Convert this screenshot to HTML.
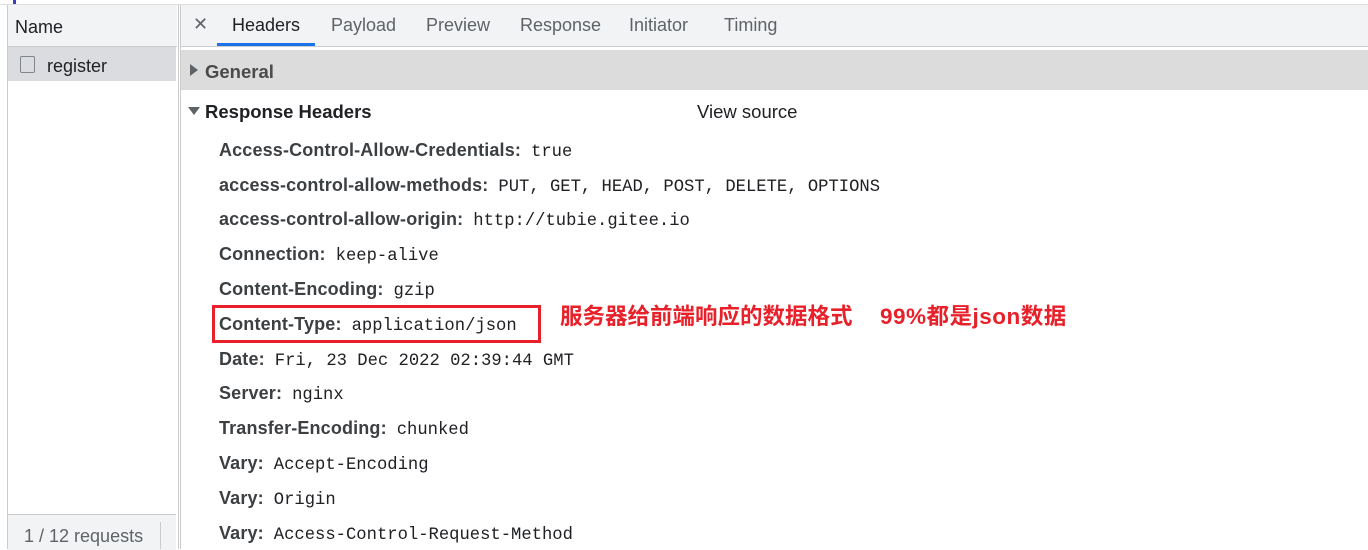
<!DOCTYPE html>
<html><head><meta charset="utf-8"><style>
body{margin:0;width:1368px;height:549px;overflow:hidden;background:#fff;font-family:"Liberation Sans",sans-serif;position:relative}
.abs{position:absolute}
.top{left:0;top:0;width:1368px;height:4px;background:#fff;border-bottom:1px solid #ddd}
.left{left:7px;top:5px;width:170px;height:544px;border-left:1px solid #ccc;border-right:1px solid #ccc;background:#fff}
.right{left:180px;top:5px;width:1188px;height:544px;border-left:1px solid #ccc}
.tabbar{left:181px;top:5px;width:1187px;height:41px;background:#f1f3f4;border-bottom:1px solid #ccc}
.tab{top:15px;font-size:18px;color:#5f6368}
.k{position:absolute;left:219px;font-size:18px;letter-spacing:0.15px;font-weight:bold;color:#3c4043;white-space:nowrap}
.k span{font-family:"Liberation Mono",monospace;font-weight:normal;color:#202124;font-size:17.2px;letter-spacing:0;margin-left:10px}
.cn{position:absolute;top:300px;font-size:21px;font-weight:bold;color:#e8202a;font-family:'Liberation Sans','Noto Sans CJK SC',sans-serif;white-space:nowrap}
</style></head><body>
<div class="abs top"></div>
<div class="abs" style="left:13px;top:0;width:3px;height:4px;background:#3d3dbb"></div>
<div class="abs left"></div>
<div class="abs" style="left:8px;top:5px;width:169px;height:41px;background:#f1f3f4;border-bottom:1px solid #ccc"></div>
<div class="abs" style="left:15px;top:17px;font-size:18px;color:#202124">Name</div>
<div class="abs" style="left:8px;top:47px;width:168px;height:34px;background:#dadce0"></div>
<div class="abs" style="left:20px;top:56px;width:13px;height:15px;border:1.5px solid #80868b;border-radius:2px"></div>
<div class="abs" style="left:47px;top:56px;font-size:18px;color:#202124">register</div>
<div class="abs" style="left:8px;top:514px;width:168px;height:35px;background:#f1f3f4;border-top:1px solid #ccc"></div>
<div class="abs" style="left:24px;top:526px;font-size:18px;color:#5f6368">1 / 12 requests</div>
<div class="abs" style="left:160px;top:522px;width:1px;height:27px;background:#ccc"></div>
<div class="abs right"></div>
<div class="abs tabbar"></div>
<div class="abs tab" style="left:193px;top:14px;color:#5f6368">✕</div>
<div class="abs tab" style="left:232px;color:#202124">Headers</div>
<div class="abs" style="left:217px;top:43px;width:98px;height:3px;background:#1a73e8"></div>
<div class="abs tab" style="left:331px">Payload</div>
<div class="abs tab" style="left:426px">Preview</div>
<div class="abs tab" style="left:520px">Response</div>
<div class="abs tab" style="left:629px">Initiator</div>
<div class="abs tab" style="left:724px">Timing</div>
<div class="abs" style="left:181px;top:50px;width:1187px;height:40px;background:#dcdcdc"></div>
<div class="abs" style="left:190px;top:64px;width:0;height:0;border-left:8px solid #5f6368;border-top:6px solid transparent;border-bottom:6px solid transparent"></div>
<div class="abs" style="left:205px;top:61px;font-size:18.5px;font-weight:bold;color:#4a4a4a">General</div>
<div class="abs" style="left:188px;top:107px;width:0;height:0;border-top:8px solid #5f6368;border-left:6px solid transparent;border-right:6px solid transparent"></div>
<div class="abs" style="left:205px;top:101px;font-size:18.5px;font-weight:bold;color:#202124">Response Headers</div>
<div class="abs" style="left:697px;top:101px;font-size:18.5px;color:#202124">View source</div>
<div class="k" style="top:140px">Access-Control-Allow-Credentials:<span>true</span></div>
<div class="k" style="top:175px">access-control-allow-methods:<span>PUT, GET, HEAD, POST, DELETE, OPTIONS</span></div>
<div class="k" style="top:209px">access-control-allow-origin:<span>http://tubie.gitee.io</span></div>
<div class="k" style="top:244px">Connection:<span>keep-alive</span></div>
<div class="k" style="top:279px">Content-Encoding:<span>gzip</span></div>
<div class="k" style="top:314px">Content-Type:<span>application/json</span></div>
<div class="k" style="top:349px">Date:<span>Fri, 23 Dec 2022 02:39:44 GMT</span></div>
<div class="k" style="top:383px">Server:<span>nginx</span></div>
<div class="k" style="top:418px">Transfer-Encoding:<span>chunked</span></div>
<div class="k" style="top:453px">Vary:<span>Accept-Encoding</span></div>
<div class="k" style="top:488px">Vary:<span>Origin</span></div>
<div class="k" style="top:523px">Vary:<span>Access-Control-Request-Method</span></div>
<div class="abs" style="left:212px;top:305px;width:323px;height:32px;border:3px solid #e8202a"></div>
<div class="cn" style="left:560px;font-size:22.5px;top:299px">服务器给前端响应的数据格式</div>
<div class="cn" style="left:880px;font-size:22.5px;top:299px;letter-spacing:0.5px">99%都是json数据</div>
</body></html>
